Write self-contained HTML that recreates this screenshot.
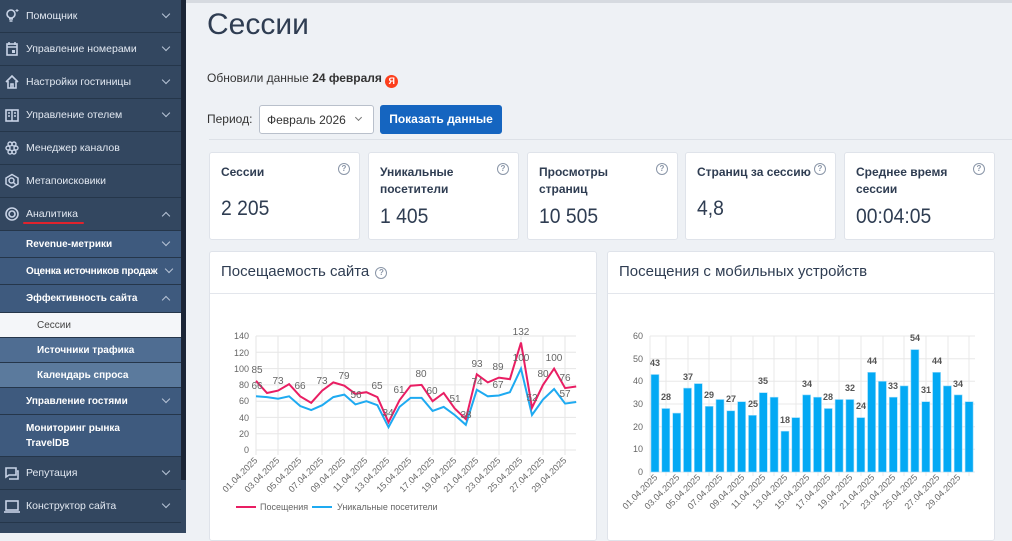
<!DOCTYPE html>
<html><head><meta charset="utf-8">
<style>
*{margin:0;padding:0;box-sizing:border-box}
body{width:1012px;height:533px;overflow:hidden;background:#eef1f5;font-family:"Liberation Sans","DejaVu Sans",sans-serif;position:relative}
#sb{position:absolute;left:0;top:0;width:186px;height:533px;background:#334760}
#sb .scr{position:absolute;left:181px;top:0;width:5px;height:480px;background:#1b2536}
.it{position:absolute;left:0;width:181px;color:#e3e9f2;font-size:10.5px;border-bottom:1px solid #25364a;display:flex;align-items:center}
.it .ic{position:absolute;left:4px;width:16px;height:16px}
.it .tx{position:absolute;left:26px}
.it .ch{position:absolute;left:163px;width:6px;height:6px;border-right:1.5px solid #b8c4d6;border-bottom:1.5px solid #b8c4d6;transform:rotate(45deg);margin-top:-4px}
.it .ch.up{transform:rotate(225deg);margin-top:3px}
.sub{background:#3e5a7e;color:#fff;font-weight:bold;font-size:10px}
.sub2{background:#4f6d92;color:#fff;font-weight:bold;font-size:10px}
.sub3{background:#5b7a9d;color:#fff;font-weight:bold;font-size:10px}
.sel{background:#f4f6f9;color:#444;font-size:10px}
.sub .tx,.sub2 .tx,.sub3 .tx,.sel .tx{left:26px}
.sub2 .tx,.sub3 .tx,.sel .tx{left:37px}
h1{position:absolute;left:207px;top:8px;font-size:30px;font-weight:normal;color:#2f3d52;letter-spacing:0}
.card{position:absolute;background:#fff;border:1px solid #dfe3ea;border-radius:3px}
.card .t{position:absolute;left:11px;top:11px;font-size:12px;font-weight:bold;color:#2f3d52;line-height:17px}
.card .v{position:absolute;left:11px;font-size:21px;color:#2f3d52;transform:scaleX(0.92);transform-origin:left}
.q{position:absolute;top:10px;width:12px;height:12px;border:1.3px solid #8a96a8;border-radius:50%;font-size:8px;color:#8a96a8;text-align:center;line-height:10px;font-weight:bold}
.ch-t{position:absolute;left:11px;top:11px;font-size:15px;color:#2f3d52}
.ch-h{position:absolute;left:0;right:0;top:41px;border-top:1px solid #e3e6ec}
</style></head><body>
<div style="position:absolute;left:186px;top:0;width:826px;height:3px;background:#d6dae0"></div>
<div id="sb">
<div class="it" style="top:0;height:33px"><svg class="ic" viewBox="0 0 16 16"><circle cx="7" cy="6" r="4" fill="none" stroke="#c8d3e6" stroke-width="1.6"/><path d="M5 11h4M5.5 13h3" stroke="#c8d3e6" stroke-width="1.5"/><path d="M13 1v3M11.5 2.5h3" stroke="#c8d3e6" stroke-width="1"/></svg><span class="tx">Помощник</span><span class="ch"></span></div>
<div class="it" style="top:33px;height:33px"><svg class="ic" viewBox="0 0 16 16"><rect x="3" y="3" width="10" height="11" fill="none" stroke="#c8d3e6" stroke-width="1.6"/><path d="M3 6h10M5 1v3M11 1v3" stroke="#c8d3e6" stroke-width="1.5"/><rect x="8" y="9" width="3" height="3" fill="#c8d3e6"/></svg><span class="tx">Управление номерами</span><span class="ch"></span></div>
<div class="it" style="top:66px;height:33px"><svg class="ic" viewBox="0 0 16 16"><path d="M2 8L8 2l6 6M4 7v7h8V7M7 14v-4h2v4" fill="none" stroke="#c8d3e6" stroke-width="1.6"/></svg><span class="tx">Настройки гостиницы</span><span class="ch"></span></div>
<div class="it" style="top:99px;height:33px"><svg class="ic" viewBox="0 0 16 16"><rect x="2" y="3" width="12" height="11" fill="none" stroke="#c8d3e6" stroke-width="1.6"/><path d="M8 3v11M4 6h2M4 9h2M10 6h2M10 9h2" stroke="#c8d3e6" stroke-width="1.5"/></svg><span class="tx">Управление отелем</span><span class="ch"></span></div>
<div class="it" style="top:132px;height:33px"><svg class="ic" viewBox="0 0 16 16"><g fill="none" stroke="#c8d3e6" stroke-width="1.4"><circle cx="6" cy="4" r="2"/><circle cx="10" cy="4" r="2"/><circle cx="4" cy="8" r="2"/><circle cx="12" cy="8" r="2"/><circle cx="6" cy="12" r="2"/><circle cx="10" cy="12" r="2"/></g></svg><span class="tx">Менеджер каналов</span></div>
<div class="it" style="top:165px;height:33px"><svg class="ic" viewBox="0 0 16 16"><path d="M8 1.5l6 3.5v6l-6 3.5-6-3.5V5z" fill="none" stroke="#c8d3e6" stroke-width="1.5"/><circle cx="7.5" cy="7.5" r="2.5" fill="none" stroke="#c8d3e6" stroke-width="1.5"/><path d="M9.5 9.5l2 2" stroke="#c8d3e6" stroke-width="1.5"/></svg><span class="tx">Метапоисковики</span></div>
<div class="it" style="top:198px;height:33px"><svg class="ic" viewBox="0 0 16 16"><circle cx="8" cy="8" r="6" fill="none" stroke="#c8d3e6" stroke-width="1.6"/><circle cx="8" cy="8" r="3" fill="none" stroke="#c8d3e6" stroke-width="1.6"/></svg><span class="tx">Аналитика</span><span class="ch up"></span><div style="position:absolute;left:23px;top:24px;width:61px;height:2px;background:#e0232d;border-radius:1px"></div></div>
<div class="it sub" style="top:231px;height:27px"><span class="tx">Revenue-метрики</span><span class="ch"></span></div>
<div class="it sub" style="top:258px;height:27px"><span class="tx" style="letter-spacing:-0.2px">Оценка источников продаж</span><span class="ch" style="left:166px"></span></div>
<div class="it sub" style="top:285px;height:28px"><span class="tx">Эффективность сайта</span><span class="ch up"></span></div>
<div class="it sel" style="top:313px;height:25px"><span class="tx">Сессии</span></div>
<div class="it sub2" style="top:338px;height:25px"><span class="tx">Источники трафика</span></div>
<div class="it sub3" style="top:363px;height:25px"><span class="tx">Календарь спроса</span></div>
<div class="it sub" style="top:388px;height:27px"><span class="tx">Управление гостями</span><span class="ch"></span></div>
<div class="it sub" style="top:415px;height:42px;line-height:15px"><span class="tx">Мониторинг рынка<br>TravelDB</span></div>
<div class="it" style="top:457px;height:33px"><svg class="ic" viewBox="0 0 16 16"><path d="M2 3h10v7H5l-3 2zM13 6h1v8h-9" fill="none" stroke="#c8d3e6" stroke-width="1.6"/></svg><span class="tx">Репутация</span><span class="ch"></span></div>
<div class="it" style="top:490px;height:33px"><svg class="ic" viewBox="0 0 16 16"><rect x="2" y="3" width="12" height="9" fill="none" stroke="#c8d3e6" stroke-width="1.6"/><path d="M0 14h16" stroke="#c8d3e6" stroke-width="1.6"/></svg><span class="tx">Конструктор сайта</span><span class="ch"></span></div>
<div class="scr"></div>
</div>

<h1>Сессии</h1>
<div style="position:absolute;left:207px;top:71px;font-size:12px;color:#333">Обновили данные <b>24 февраля</b> <span style="display:inline-block;width:13px;height:13px;border-radius:50%;background:#fc3f1d;color:#fff;font-size:9px;text-align:center;line-height:13px;font-weight:bold;vertical-align:-2px">Я</span></div>
<div style="position:absolute;left:207px;top:112px;font-size:12px;color:#333">Период:</div>
<div style="position:absolute;left:259px;top:105px;width:115px;height:29px;border:1px solid #b9c0cb;border-radius:3px;background:#fff;font-size:12px;color:#333;padding:7px 0 0 7px">Февраль 2026<span style="position:absolute;left:96px;top:9px;width:5px;height:5px;border-right:1px solid #777;border-bottom:1px solid #777;transform:rotate(45deg)"></span></div>
<div style="position:absolute;left:380px;top:105px;width:122px;height:29px;background:#1565c0;border-radius:3px;color:#fff;font-size:12px;font-weight:bold;text-align:center;line-height:29px">Показать данные</div>
<div style="position:absolute;left:209px;top:139px;width:803px;border-top:1px solid #dde1e7"></div>

<div class="card" style="left:209px;top:152px;width:151px;height:88px"><div class="t">Сессии</div><div class="q" style="left:128px">?</div><div class="v" style="top:44px">2 205</div></div>
<div class="card" style="left:368px;top:152px;width:151px;height:88px"><div class="t">Уникальные<br>посетители</div><div class="q" style="left:128px">?</div><div class="v" style="top:52px">1 405</div></div>
<div class="card" style="left:527px;top:152px;width:151px;height:88px"><div class="t">Просмотры<br>страниц</div><div class="q" style="left:128px">?</div><div class="v" style="top:52px">10 505</div></div>
<div class="card" style="left:685px;top:152px;width:151px;height:88px"><div class="t">Страниц за сессию</div><div class="q" style="left:128px">?</div><div class="v" style="top:44px">4,8</div></div>
<div class="card" style="left:844px;top:152px;width:151px;height:88px"><div class="t">Среднее время<br>сессии</div><div class="q" style="left:128px">?</div><div class="v" style="top:52px">00:04:05</div></div>

<div class="card" style="left:209px;top:251px;width:388px;height:290px"><div class="ch-t">Посещаемость сайта <span class="q" style="position:relative;display:inline-block;top:-1px;left:2px;font-size:8px">?</span></div><div class="ch-h"></div></div>
<div class="card" style="left:607px;top:251px;width:388px;height:290px"><div class="ch-t">Посещения с мобильных устройств</div><div class="ch-h"></div></div>

<svg style="position:absolute;left:0;top:0" width="1012" height="533" font-family="Liberation Sans, sans-serif">
<g stroke="#e6e6e6" stroke-width="1">
<path d="M256 450H576M256 433.7H576M256 417.4H576M256 401.2H576M256 384.9H576M256 368.6H576M256 352.3H576M256 336H576"/>
<path d="M256 336V455M278 336V455M300 336V455M322 336V455M344 336V455M366 336V455M388 336V455M410 336V455M433 336V455M455 336V455M477 336V455M499 336V455M521 336V455M543 336V455M565 336V455"/>
</g>
<g font-size="9" fill="#666" text-anchor="end">
<text x="249" y="453">0</text><text x="249" y="437">20</text><text x="249" y="421">40</text><text x="249" y="404">60</text><text x="249" y="388">80</text><text x="249" y="372">100</text><text x="249" y="356">120</text><text x="249" y="339">140</text>
</g>
<g font-size="9" fill="#666" text-anchor="end">
<text transform="translate(258,461) rotate(-45)">01.04.2025</text><text transform="translate(280,461) rotate(-45)">03.04.2025</text><text transform="translate(302,461) rotate(-45)">05.04.2025</text><text transform="translate(324,461) rotate(-45)">07.04.2025</text><text transform="translate(346,461) rotate(-45)">09.04.2025</text><text transform="translate(368,461) rotate(-45)">11.04.2025</text><text transform="translate(390,461) rotate(-45)">13.04.2025</text><text transform="translate(412,461) rotate(-45)">15.04.2025</text><text transform="translate(435,461) rotate(-45)">17.04.2025</text><text transform="translate(457,461) rotate(-45)">19.04.2025</text><text transform="translate(479,461) rotate(-45)">21.04.2025</text><text transform="translate(501,461) rotate(-45)">23.04.2025</text><text transform="translate(523,461) rotate(-45)">25.04.2025</text><text transform="translate(545,461) rotate(-45)">27.04.2025</text><text transform="translate(567,461) rotate(-45)">29.04.2025</text>
</g>
<polyline fill="none" stroke="#1eaaf1" stroke-width="2" points="256,396.3 267,397.1 278.1,398.7 289.1,396.3 300.2,406 311.2,410.1 322.2,405.2 333.3,397.1 344.3,394.6 355.4,404.4 366.4,401.2 377.4,405.2 388.5,427.2 399.5,406.9 410.6,397.9 421.6,397.9 432.6,410.9 443.7,406.9 454.7,415 465.8,424.8 476.8,389.8 487.8,396.3 498.9,395.5 509.9,392.2 521,368.6 532,415 543,399.5 554.1,389 565.1,403.6 576.2,402"/>
<polyline fill="none" stroke="#e91e63" stroke-width="2" points="256,380.8 267,393 278.1,390.6 289.1,384.1 300.2,396.3 311.2,402.8 322.2,390.6 333.3,382.4 344.3,385.7 355.4,393.8 366.4,392.2 377.4,397.1 388.5,422.3 399.5,400.3 410.6,385.7 421.6,384.9 432.6,401.2 443.7,393 454.7,408.5 465.8,419.1 476.8,374.3 487.8,382.4 498.9,377.6 509.9,379.2 521,342.6 532,407.7 543,384.9 554.1,368.6 565.1,388.1 576.2,386.5"/>
<g font-size="10" fill="#666" text-anchor="middle">
<text x="257" y="373">85</text><text x="257" y="389">66</text><text x="278" y="384">73</text><text x="300" y="389">66</text><text x="322" y="384">73</text><text x="344" y="379">79</text><text x="356" y="398">56</text><text x="377" y="389">65</text><text x="388" y="416">34</text><text x="399" y="393">61</text><text x="421" y="377">80</text><text x="432" y="394">60</text><text x="455" y="402">51</text><text x="466" y="418">38</text><text x="477" y="367">93</text><text x="477" y="385">74</text><text x="498" y="370">89</text><text x="498" y="388">67</text><text x="521" y="335">132</text><text x="521" y="361">100</text><text x="532" y="401">52</text><text x="543" y="377">80</text><text x="554" y="361">100</text><text x="565" y="381">76</text><text x="565" y="397">57</text>
</g>
<line x1="236" y1="507" x2="256" y2="507" stroke="#e91e63" stroke-width="2"/><text x="260" y="510" font-size="9" fill="#666">Посещения</text>
<line x1="312" y1="507" x2="332" y2="507" stroke="#1eaaf1" stroke-width="2"/><text x="337" y="510" font-size="9" fill="#666">Уникальные посетители</text>

<g stroke="#e8e8e8" stroke-width="1">
<path d="M650 472H975M650 449.3H975M650 426.7H975M650 404H975M650 381.3H975M650 358.7H975M650 336H975"/>
<path d="M650 336V476M666 336V476M688 336V476M709 336V476M731 336V476M753 336V476M774 336V476M796 336V476M818 336V476M839 336V476M861 336V476M883 336V476M904 336V476M926 336V476M948 336V476M969 336V476"/>
</g>
<g font-size="9" fill="#666" text-anchor="end">
<text x="643" y="475">0</text><text x="643" y="452">10</text><text x="643" y="430">20</text><text x="643" y="407">30</text><text x="643" y="384">40</text><text x="643" y="362">50</text><text x="643" y="339">60</text>
</g>
<g fill="#03a9f4" stroke="#9fdcfb" stroke-width="0.6">
<rect x="651" y="374.5" width="8" height="97.5"/><rect x="661.8" y="408.5" width="8" height="63.5"/><rect x="672.7" y="413.1" width="8" height="58.9"/><rect x="683.5" y="388.1" width="8" height="83.9"/><rect x="694.3" y="383.6" width="8" height="88.4"/><rect x="705.2" y="406.3" width="8" height="65.7"/><rect x="716" y="399.5" width="8" height="72.5"/><rect x="726.8" y="410.8" width="8" height="61.2"/><rect x="737.6" y="401.7" width="8" height="70.3"/><rect x="748.5" y="415.3" width="8" height="56.7"/><rect x="759.3" y="392.7" width="8" height="79.3"/><rect x="770.1" y="397.2" width="8" height="74.8"/><rect x="781" y="431.2" width="8" height="40.8"/><rect x="791.8" y="417.6" width="8" height="54.4"/><rect x="802.6" y="394.9" width="8" height="77.1"/><rect x="813.5" y="397.2" width="8" height="74.8"/><rect x="824.3" y="408.5" width="8" height="63.5"/><rect x="835.1" y="399.5" width="8" height="72.5"/><rect x="845.9" y="399.5" width="8" height="72.5"/><rect x="856.8" y="417.6" width="8" height="54.4"/><rect x="867.6" y="372.3" width="8" height="99.7"/><rect x="878.4" y="381.3" width="8" height="90.7"/><rect x="889.3" y="397.2" width="8" height="74.8"/><rect x="900.1" y="385.9" width="8" height="86.1"/><rect x="910.9" y="349.6" width="8" height="122.4"/><rect x="921.8" y="401.7" width="8" height="70.3"/><rect x="932.6" y="372.3" width="8" height="99.7"/><rect x="943.4" y="385.9" width="8" height="86.1"/><rect x="954.2" y="394.9" width="8" height="77.1"/><rect x="965.1" y="401.7" width="8" height="70.3"/>
</g>
<g font-size="9" font-weight="bold" fill="#555" text-anchor="middle">
<text x="655" y="366">43</text><text x="666" y="400">28</text><text x="688" y="380">37</text><text x="709" y="398">29</text><text x="731" y="402">27</text><text x="753" y="407">25</text><text x="763" y="384">35</text><text x="785" y="423">18</text><text x="807" y="387">34</text><text x="828" y="400">28</text><text x="850" y="391">32</text><text x="861" y="409">24</text><text x="872" y="364">44</text><text x="893" y="389">33</text><text x="915" y="341">54</text><text x="926" y="393">31</text><text x="937" y="364">44</text><text x="958" y="387">34</text>
</g>
<g font-size="9" fill="#666" text-anchor="end">
<text transform="translate(658,478) rotate(-45)">01.04.2025</text><text transform="translate(680,478) rotate(-45)">03.04.2025</text><text transform="translate(701,478) rotate(-45)">05.04.2025</text><text transform="translate(723,478) rotate(-45)">07.04.2025</text><text transform="translate(745,478) rotate(-45)">09.04.2025</text><text transform="translate(766,478) rotate(-45)">11.04.2025</text><text transform="translate(788,478) rotate(-45)">13.04.2025</text><text transform="translate(810,478) rotate(-45)">15.04.2025</text><text transform="translate(831,478) rotate(-45)">17.04.2025</text><text transform="translate(853,478) rotate(-45)">19.04.2025</text><text transform="translate(875,478) rotate(-45)">21.04.2025</text><text transform="translate(896,478) rotate(-45)">23.04.2025</text><text transform="translate(918,478) rotate(-45)">25.04.2025</text><text transform="translate(940,478) rotate(-45)">27.04.2025</text><text transform="translate(961,478) rotate(-45)">29.04.2025</text>
</g>
</svg>
</body></html>
